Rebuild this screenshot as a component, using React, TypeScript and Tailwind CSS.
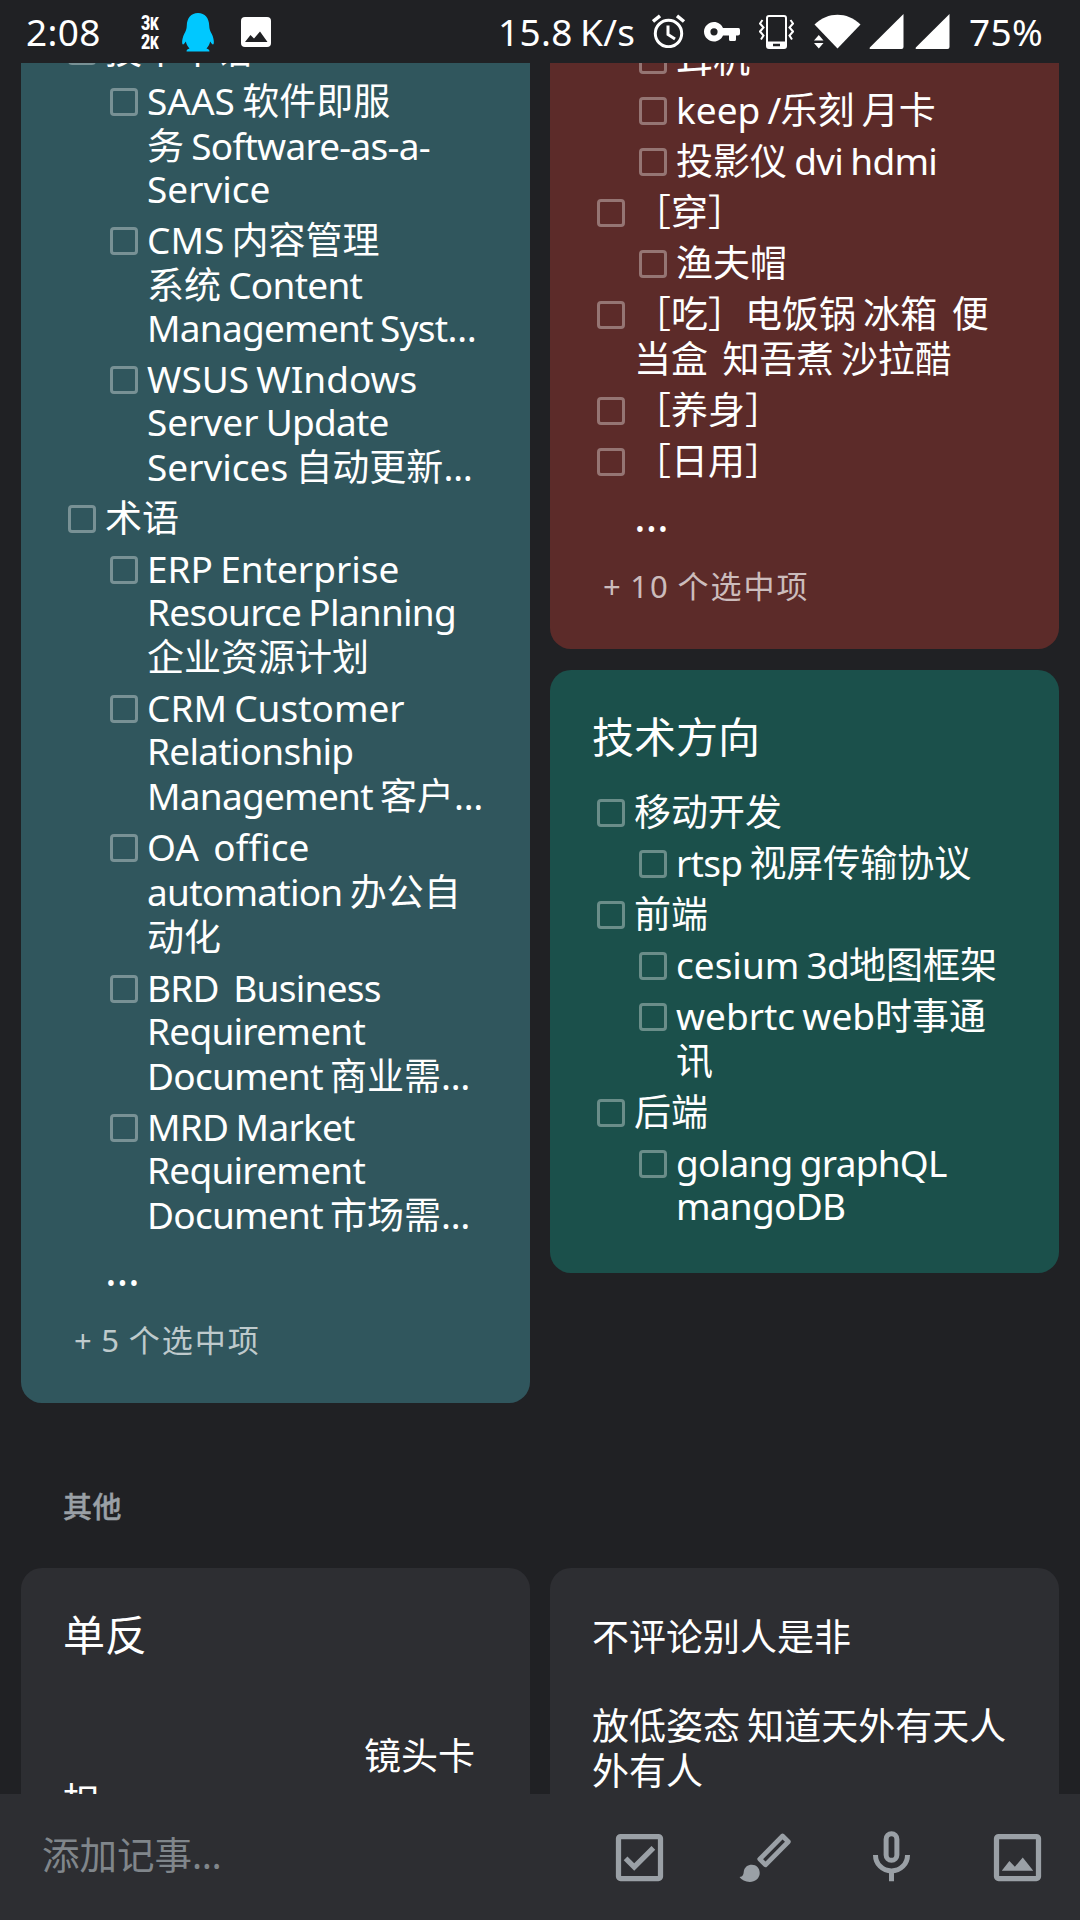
import React from 'react';

type Item = { lines: string[]; sub?: boolean };

const CJK = /([\u2e80-\u9fff\uff00-\uffef]+)/;
const LOOSE = /^(SAAS|CMS|WSUS|WIndows|Server|Services?|ERP|Enterprise|CRM|Customer|keep|cesium|webrtc|web|OA|office)$/;

/* Latin words are set slightly tighter than the Han characters around them. */
function Mixed({ text }: { text: string }) {
  return (
    <>
      {text.split(CJK).filter(Boolean).map((run, i) =>
        CJK.test(run) ? (
          <span key={i}>{run}</span>
        ) : (
          <span key={i} className="tracking-[-0.02em] [word-spacing:-0.045em]">
            {run.split(/( +)/).map((word, j) =>
              LOOSE.test(word) ? (
                <span key={j} className="tracking-normal">{word}</span>
              ) : (
                word
              ),
            )}
          </span>
        ),
      )}
    </>
  );
}

function Row({ item }: { item: Item }) {
  return (
    <li className={item.sub ? 'flex pl-[42px]' : 'flex'}>
      <span className="mt-[10px] mr-[9.500px] size-[28px] shrink-0 rounded-[4px] border-[3px] border-white/35" />
      <div className="whitespace-pre text-[37px] leading-[45px]">
        {item.lines.map((line, i) =>
          i === 0 || CJK.test(line) ? (
            <div key={i} className="h-[45px]"><Mixed text={line} /></div>
          ) : (
            <div key={i} className="h-[43px] leading-[41px]"><Mixed text={line} /></div>
          ),
        )}
      </div>
    </li>
  );
}

function CheckList({ items }: { items: Item[] }) {
  return (
    <ul className="flex flex-col gap-[6px] pl-[46.500px]">
      {items.map((item, i) => <Row key={i} item={item} />)}
    </ul>
  );
}

function More({ label }: { label: string }) {
  return (
    <>
      <div className="h-[72px] pl-[84px] text-[44px] leading-[64px]">…</div>
      <div className="h-[90px] pt-[4px] pl-[53px] text-[31px] leading-[54px] tracking-[0.065em] text-white/70 [word-spacing:-2.500px]">{label}</div>
    </>
  );
}

const glossary: Item[] = [
  { lines: ['技术术语'] },
  { sub: true, lines: ['SAAS 软件即服', '务 Software-as-a-', 'Service'] },
  { sub: true, lines: ['CMS 内容管理', '系统 Content', 'Management Syst…'] },
  { sub: true, lines: ['WSUS WIndows', 'Server Update', 'Services 自动更新…'] },
  { lines: ['术语'] },
  { sub: true, lines: ['ERP Enterprise', 'Resource Planning', '企业资源计划'] },
  { sub: true, lines: ['CRM Customer', 'Relationship', 'Management 客户…'] },
  { sub: true, lines: ['OA  office', 'automation 办公自', '动化'] },
  { sub: true, lines: ['BRD  Business', 'Requirement', 'Document 商业需…'] },
  { sub: true, lines: ['MRD Market', 'Requirement', 'Document 市场需…'] },
];

const shopping: Item[] = [
  { sub: true, lines: ['耳机'] },
  { sub: true, lines: ['keep /乐刻 月卡'] },
  { sub: true, lines: ['投影仪 dvi hdmi'] },
  { lines: ['［穿］'] },
  { sub: true, lines: ['渔夫帽'] },
  { lines: ['［吃］电饭锅 冰箱  便', '当盒  知吾煮 沙拉醋'] },
  { lines: ['［养身］'] },
  { lines: ['［日用］'] },
];

const tech: Item[] = [
  { lines: ['移动开发'] },
  { sub: true, lines: ['rtsp 视屏传输协议'] },
  { lines: ['前端'] },
  { sub: true, lines: ['cesium 3d地图框架'] },
  { sub: true, lines: ['webrtc web时事通', '讯'] },
  { lines: ['后端'] },
  { sub: true, lines: ['golang graphQL', 'mangoDB'] },
];

function StatusBar() {
  return (
    <header className="flex h-[63px] shrink-0 items-start pl-[26px] text-[37px] leading-[45px] text-white">
      <span className="mt-[9px] w-[115px] tracking-[0.01em]">2:08</span>
      <span className="mt-[14px] flex w-[41px] flex-col font-['Roboto'] text-[21px] leading-[19px] font-black tracking-[-0.02em]">
        <span className="h-[19px] origin-left scale-x-[0.76]">3<span className="text-[18px]">K</span></span>
        <span className="h-[19px] origin-left scale-x-[0.76]">2<span className="text-[18px]">K</span></span>
      </span>
      <svg className="mt-[13px] h-[39px] w-[32px]" viewBox="0 0 32 39" fill="#00c8ff">
        <path d="M16 0C9 0 5 5 4.800 12.500C4.700 16 3.800 18 2.200 21C.4 24.500-.3 29 .4 31C1 32.400 2.700 30.500 3.800 28.600C4.600 31.700 5.700 33.800 7.500 35.500C5.500 36 4.300 37 4.600 38.500H27.400C27.700 37 26.500 36 24.500 35.500C26.300 33.800 27.400 31.700 28.200 28.600C29.300 30.500 31 32.400 31.600 31C32.300 29 31.600 24.500 29.800 21C28.200 18 27.300 16 27.200 12.500C27 5 23 0 16 0Z" />
      </svg>
      <svg className="mt-[17px] ml-[27px] size-[30px]" viewBox="0 0 30 30">
        <rect width="30" height="30" rx="4" fill="#fff" />
        <path d="M4 25 9.500 18 13 21.500 19 14.500 26.500 25Z" fill="#202124" />
      </svg>
      <span className="mt-[9px] ml-[227px] w-[154px] whitespace-pre tracking-[0.008em] [word-spacing:-2.500px]">15.8 K/s</span>
      <svg className="mt-[14px] size-[34px]" viewBox="0 0 34 34" fill="none" stroke="#fff" strokeWidth="3">
        <circle cx="16.500" cy="19.500" r="13.200" />
        <path d="M16 11.500V20.500L23 25" />
        <path d="M1 7.500 8 1.800M32 7.500 25 1.800" strokeWidth="3.500" />
      </svg>
      <svg className="mt-[22px] ml-[18px] h-[20px] w-[37px]" viewBox="0 0 37 20" fill="#fff" fillRule="evenodd">
        <path d="M10 0C14 0 17.500 2.500 19 6H34.500Q36 6 36 8V11.500Q36 13.500 34 13.500H32V17.500Q32 19 30.500 19H26.500Q25 19 25 17.500V13.500H19C17.500 17 14 19.500 10 19.500C4.500 19.500 0 15 0 9.750C0 4.500 4.500 0 10 0ZM10 6.200A3.600 3.600 0 1 0 10 13.400A3.600 3.600 0 1 0 10 6.200Z" />
      </svg>
      <svg className="mt-[15px] ml-[18px] h-[34px] w-[35px]" viewBox="0 0 35 34" fill="none" stroke="#fff" strokeWidth="2">
        <path d="M10 1H25Q27 1 27 3V31Q27 33 25 33H10Q8 33 8 31V3Q8 1 10 1Z" />
        <path d="M8 26.500H27V33H8ZM14 28.800V31.300H21V28.800Z" fill="#fff" fillRule="evenodd" stroke="none" />
        <path d="M3.500 5 1 8.500 4.500 12.500 1 16.500 4.500 20.500 2 24.500M31.500 5 34 8.500 30.500 12.500 34 16.500 30.500 20.500 33 24.500" />
      </svg>
      <svg className="mt-[14px] ml-[20px] h-[35px] w-[47px]" viewBox="0 0 47 35" fill="#fff">
        <path d="M.5 10.500C14-2.500 33-2.500 46.500 10.500L23.500 34.500Z" />
        <path d="M0 26.500 4.800 21 9.500 26.500ZM0 29H9.500L4.800 34.500Z" />
      </svg>
      <svg className="mt-[14px] ml-[7.500px] h-[35px] w-[35px]" viewBox="0 0 35 35" fill="#fff">
        <path d="M34.500 0V33Q34.500 35 32.500 35H1.500Q0 35 .8 33.500Z" />
      </svg>
      <svg className="mt-[14px] ml-[11px] h-[35px] w-[35px]" viewBox="0 0 35 35" fill="#fff">
        <path d="M34.500 0V33Q34.500 35 32.500 35H1.500Q0 35 .8 33.500Z" />
      </svg>
      <span className="mt-[9px] ml-[19.500px] tracking-[0.01em]">75%</span>
    </header>
  );
}

function Footer() {
  return (
    <footer className="flex h-[126px] shrink-0 items-start bg-[#2d2e32] pt-[32px]">
      <div className="w-[607px] pl-[42px] text-[37.500px] leading-[58px] text-[#80868b]">添加记事…</div>
      <div className="flex gap-[63px] pl-px text-[#9aa0a6]">
        <svg className="size-[63px]" viewBox="0 0 24 24" fill="currentColor">
          <rect x="4" y="4" width="16" height="16" rx="0.800" fill="none" stroke="currentColor" strokeWidth="2" />
          <path d="M17.990 9 16.580 7.580 9.990 14.170 7.410 11.600 5.990 13.010 9.990 17Z" />
        </svg>
        <svg className="size-[63px]" viewBox="0 0 24 24" fill="currentColor">
          <path d="M18.500 3.800 20.700 6 12 14.800 9.800 12.600Z" fill="none" stroke="currentColor" strokeWidth="1.800" strokeLinejoin="round" />
          <path d="M2.100 19.400C3.400 19.300 3.600 18.400 3.700 17.500C3.900 15.800 5.200 14.800 6.800 14.800C8.500 14.800 9.800 16.100 9.800 17.900C9.800 19.900 8 21.300 6 21.300C4.300 21.300 2.900 20.500 2.100 19.400Z" />
        </svg>
        <svg className="size-[63px]" viewBox="0 0 24 24" fill="none" stroke="currentColor" strokeWidth="1.900">
          <rect x="9.950" y="2.950" width="4.100" height="10.100" rx="2.050" />
          <path d="M5.900 11C5.900 14.500 8.600 17.100 12 17.100S18.100 14.500 18.100 11M12 17V21" />
        </svg>
        <svg className="size-[63px]" viewBox="0 0 24 24" fill="currentColor">
          <rect x="4" y="4" width="16" height="16" rx="0.800" fill="none" stroke="currentColor" strokeWidth="2" />
          <path d="M6 17 8.900 13.300 11 15.500 14 12 18 17Z" />
        </svg>
      </div>
    </footer>
  );
}

export default function App() {
  return (
    <div className="flex h-[1920px] w-[1080px] flex-col overflow-hidden bg-[#202124] font-['Noto_Sans','Noto_Sans_CJK_SC',sans-serif] text-white">
      <StatusBar />
      <main className="h-[1731px] overflow-hidden px-[21px]">
        <div className="-mt-[100px] grid grid-cols-2 items-start gap-x-[20px]">
          <section className="h-[1440px] rounded-[21px] bg-[#30565d] pt-[64px]">
            <CheckList items={glossary} />
            <More label="+ 5 个选中项" />
          </section>
          <div className="flex flex-col gap-[21px]">
            <section className="h-[686px] rounded-[21px] bg-[#5c2b29] pt-[73px]">
              <CheckList items={shopping} />
              <More label="+ 10 个选中项" />
            </section>
            <section className="h-[603px] rounded-[21px] bg-[#1b504b] pt-[38px]">
              <h2 className="mb-[24px] pl-[42px] text-[42px] leading-[57px]">技术方向</h2>
              <CheckList items={tech} />
            </section>
          </div>
        </div>
        <h3 className="flex h-[165px] items-center pt-[43px] pl-[42px] text-[29px] leading-[42px] font-medium tracking-[0.02em] text-[#9aa0a6] [-webkit-text-stroke:0.400px]">其他</h3>
        <div className="grid grid-cols-2 gap-x-[20px] text-[37px] leading-[45px]">
          <section className="h-[400px] rounded-[21px] bg-[#2d2e32] px-[42px] pt-[38px]">
            <h2 className="mb-[70px] text-[42px] leading-[57px]">单反</h2>
            <p className="pl-[301px]">镜头卡</p>
            <p>扣</p>
          </section>
          <section className="h-[400px] rounded-[21px] bg-[#2d2e32] pt-[46px] pl-[42px]">
            <p className="mb-[44px]">不评论别人是非</p>
            <p className="whitespace-pre"><Mixed text="放低姿态 知道天外有天人" /></p>
            <p>外有人</p>
          </section>
        </div>
      </main>
      <Footer />
    </div>
  );
}
